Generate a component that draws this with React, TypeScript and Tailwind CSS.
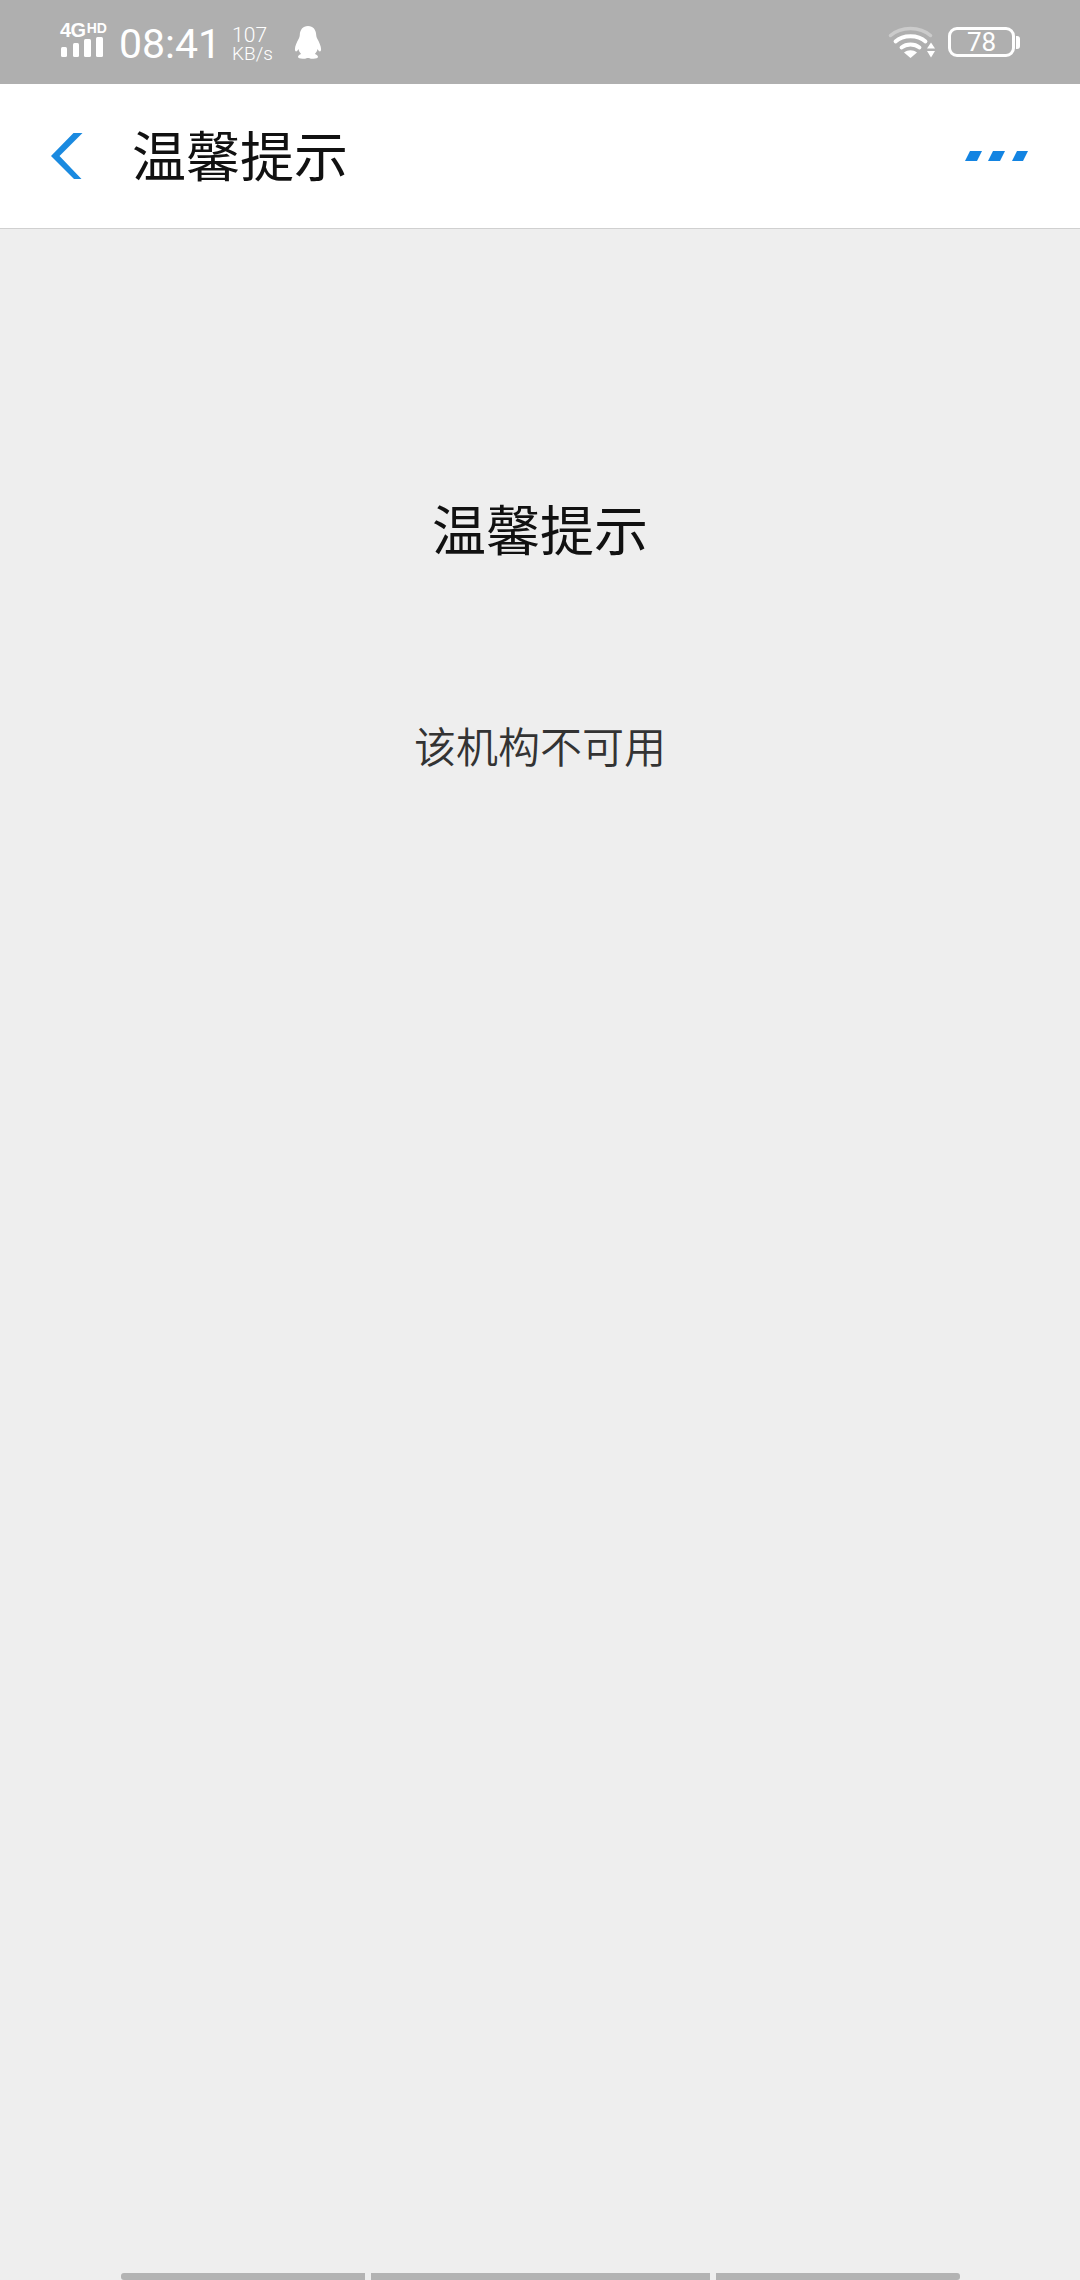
import React from "react";

const CJK = "font-['Noto_Sans_CJK_SC',sans-serif]";

function Signal() {
  return (
    <div className="flex flex-col items-start w-[46px] mt-[-4px]">
      <div className="flex items-start h-[14px] text-white font-bold font-['Liberation_Sans',sans-serif]">
        <span className="text-[20px] leading-[15px] tracking-[-0.5px]">4G</span>
        <span className="text-[14px] leading-[10px] ml-[1px]">HD</span>
      </div>
      <div className="flex items-end gap-[5.500px] ml-[1px] h-[20px]">
        <div className="w-[6px] h-[10px] bg-white rounded-[1.500px]" />
        <div className="w-[6px] h-[14px] bg-white rounded-[1.500px]" />
        <div className="w-[6.500px] h-[18px] bg-white rounded-[1.500px]" />
        <div className="w-[6.500px] h-[20px] bg-white rounded-[1.500px]" />
      </div>
    </div>
  );
}

function Penguin() {
  return (
    <svg width="28" height="33" viewBox="0 0 30 34" preserveAspectRatio="none" fill="#fff">
      <path d="M15 0c-5.600 0-8.600 4-8.800 9.200-.1 1.600-.5 2.600-1.300 4.200C3 16.600 1 20.800 1 24c0 1.400.5 2.200 1.200 2.200.9 0 1.800-1 2.600-2.400.4 2 1.400 3.600 2.800 5-1.800.6-3.300 1.600-3.300 3 0 1.400 2.200 2 5 2 1.900 0 3.500-.3 4.700-.9h2c1.200.6 2.800.9 4.700.9 2.800 0 5-.6 5-2 0-1.400-1.500-2.400-3.300-3 1.400-1.400 2.400-3 2.800-5 .8 1.400 1.700 2.400 2.600 2.400.7 0 1.200-.8 1.200-2.200 0-3.200-2-7.400-3.900-10.600-.8-1.600-1.200-2.600-1.300-4.200C23.600 4 20.600 0 15 0z" />
    </svg>
  );
}

function Wifi() {
  return (
    <svg width="48" height="36" viewBox="0 0 48 36" fill="none">
      <path d="M2.500 11.500C13 2 32 2 42.500 11.500" stroke="#fff" strokeOpacity="0.35" strokeWidth="3.500" strokeLinecap="round" />
      <path d="M7.500 17.500C15 10.500 30 10.500 37.500 17.500" stroke="#fff" strokeWidth="3.800" strokeLinecap="round" />
      <path d="M13.500 23.500C18.500 19.500 26.500 19.500 31.500 23.500" stroke="#fff" strokeWidth="3.800" strokeLinecap="round" />
      <path d="M16 28.500C20 25.500 25 25.500 29 28.500L22.500 34Z" fill="#fff" />
      <path d="M43 18.500L47 24.500H39Z" fill="#fff" />
      <path d="M43 33.500L47 27H39Z" fill="#fff" />
    </svg>
  );
}

function Battery() {
  return (
    <div className="flex items-center">
      <div className="w-[67px] h-[30px] rounded-[9px] border-[3px] border-white flex items-center justify-center text-[26px] leading-none text-white font-['Roboto',sans-serif] font-normal">
        78
      </div>
      <div className="w-[4px] h-[13px] bg-white rounded-r-[3px] ml-[1px]" />
    </div>
  );
}

function Back() {
  return (
    <svg width="32" height="46" viewBox="0 0 32 46" fill="#1a8ae0">
      <path d="M22.500 0H31.500L8.500 23L30.500 46H23L0 23Z" />
    </svg>
  );
}

function Dots() {
  return (
    <svg width="63" height="10" viewBox="0 0 63 10" fill="#1384e2">
      <path d="M5 0H17L12 10H0Z" />
      <path d="M28 0H40L35 10H23Z" />
      <path d="M52 0H63L58 10H47Z" />
    </svg>
  );
}

export default function App() {
  return (
    <div className="w-[1080px] h-[2280px] flex flex-col bg-[#eeeeee] overflow-hidden">
      <div className="h-[84px] shrink-0 bg-[#afafaf] flex items-center pl-[60px] pr-[60px]">
        <Signal />
        <div className="ml-[13px] mt-[4px] text-[41px] leading-none text-white font-['Roboto',sans-serif] font-normal">
          08:41
        </div>
        <div className="ml-[11px] mt-[3px] flex flex-col text-white font-['Roboto',sans-serif] font-light">
          <span className="text-[21px] leading-[24px] h-[20px]">107</span>
          <span className="text-[19px] leading-[22px]">KB/s</span>
        </div>
        <div className="ml-[21px] mt-[1px]">
          <Penguin />
        </div>
        <div className="ml-auto flex items-center gap-[12px]">
          <Wifi />
          <Battery />
        </div>
      </div>

      <div className="h-[145px] shrink-0 bg-white border-b-[1.500px] border-[#d0d0d0] flex items-center pl-[51px] pr-[52px]">
        <Back />
        <div className={`ml-[49px] mb-[5px] text-[54px] leading-none text-[#111111] ${CJK}`}>温馨提示</div>
        <div className="ml-auto">
          <Dots />
        </div>
      </div>

      <div className="flex-1 flex flex-col items-center">
        <div className={`mt-[267px] text-[54px] leading-[64px] text-[#111111] ${CJK}`}>温馨提示</div>
        <div className={`mt-[155px] text-[42px] leading-[60px] text-[#333333] font-[350] ${CJK}`}>该机构不可用</div>
      </div>

      <div className="h-[7px] shrink-0 flex pl-[121px] gap-[6px]">
        <div className="w-[244px] bg-[#b3b3b3] rounded-l-[3px]" />
        <div className="w-[339px] bg-[#b3b3b3]" />
        <div className="w-[244px] bg-[#b3b3b3] rounded-r-[3px]" />
      </div>
    </div>
  );
}
